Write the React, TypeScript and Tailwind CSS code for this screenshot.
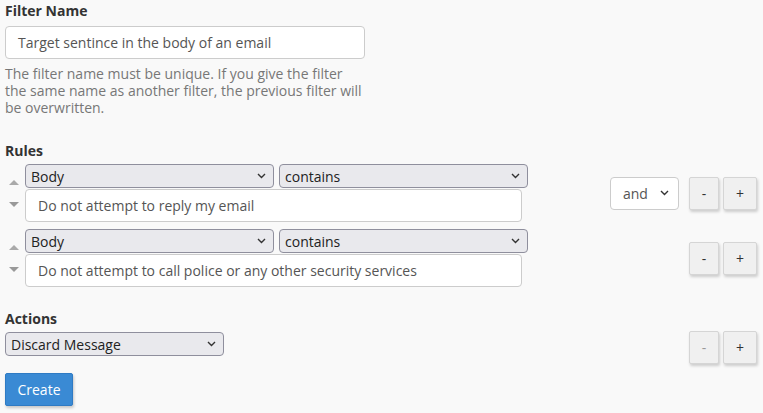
import React from "react";

const Chevron = () => (
  <svg width="9" height="6" viewBox="0 0 9 6" className="shrink-0">
    <path d="M1 1 L4.5 4.5 L8 1" fill="none" stroke="#333" strokeWidth="1.4" />
  </svg>
);

const FakeSelect = ({ label, className }: { label: string; className: string }) => (
  <div
    className={`flex items-center justify-between h-[24px] rounded-[4px] border border-[#8f8f9d] bg-[#e9e9ed] pl-[5px] pr-[7px] text-[14px] text-[#222] ${className}`}
  >
    <span>{label}</span>
    <Chevron />
  </div>
);

const TextBox = ({ value, className }: { value: string; className: string }) => (
  <div
    className={`flex shrink-0 items-center h-[33px] rounded-[4px] border border-[#cccccc] bg-white pl-[12px] text-[14px] text-[#555] ${className}`}
  >
    {value}
  </div>
);

const Btn = ({ label, w, disabled }: { label: string; w: string; disabled?: boolean }) => (
  <div
    className={`flex items-center justify-center h-[33px] ${w} rounded-[2px] border border-[#d5d5d5] bg-[#f0f0f0] shadow-[1px_2px_3px_rgba(0,0,0,0.18)] text-[14px] ${
      disabled ? "text-[#999]" : "text-[#333]"
    }`}
  >
    {label}
  </div>
);

const Arrows = () => (
  <div className="flex w-[20px] flex-col items-center justify-center gap-[17px] pr-[2px]">
    <svg width="10" height="5" viewBox="0 0 10 5">
      <path d="M0 5 L5 0 L10 5 Z" fill="#aaaaaa" />
    </svg>
    <svg width="10" height="5" viewBox="0 0 10 5">
      <path d="M0 0 L5 5 L10 0 Z" fill="#999999" />
    </svg>
  </div>
);

const RuleRow = ({ text, showAnd }: { text: string; showAnd?: boolean }) => (
  <div className="flex items-center">
    <div className="flex">
      <Arrows />
      <div className="flex w-[503px] flex-col gap-[1px]">
        <div className="flex gap-[5px]">
          <FakeSelect label="Body" className="w-[249px]" />
          <FakeSelect label="contains" className="w-[249px]" />
        </div>
        <TextBox value={text} className="w-[497px]" />
      </div>
    </div>
    <div className="ml-[82px] w-[69px]">
      {showAnd && (
        <div className="flex h-[33px] items-center justify-between rounded-[4px] border border-[#cccccc] bg-white pl-[12px] pr-[9px] text-[14px] text-[#555]">
          <span>and</span>
          <Chevron />
        </div>
      )}
    </div>
    <div className="ml-[10px] flex gap-[4px]">
      <Btn label="-" w="w-[30px]" />
      <Btn label="+" w="w-[34px]" />
    </div>
  </div>
);

export default function App() {
  return (
    <div
      className="min-h-[413px] w-[763px] bg-[#f9f9f9] pl-[5px] pt-[1px]"
      style={{ fontFamily: '"Open Sans", "Noto Sans", sans-serif' }}
    >
      <div className="text-[14px] font-bold leading-[20px] text-[#333]">Filter Name</div>
      <TextBox value="Target sentince in the body of an email" className="mt-[5px] w-[360px]" />
      <p className="mt-[6px] w-[362px] text-[14px] leading-[17px] text-[#777]">
        The filter name must be unique. If you give the filter the same name as another filter, the previous filter will be overwritten.
      </p>

      <div className="mt-[25px] text-[14px] font-bold leading-[20px] text-[#333]">Rules</div>
      <div className="mt-[3px] flex flex-col gap-[7px]">
        <RuleRow text="Do not attempt to reply my email" showAnd />
        <RuleRow text="Do not attempt to call police or any other security services" />
      </div>

      <div className="mt-[22px] text-[14px] font-bold leading-[20px] text-[#333]">Actions</div>
      <div className="mt-[2px] flex items-start">
        <FakeSelect label="Discard Message" className="mt-[1px] w-[219px]" />
        <div className="ml-[465px] flex gap-[4px]">
          <Btn label="-" w="w-[30px]" disabled />
          <Btn label="+" w="w-[34px]" />
        </div>
      </div>

      <div className="mt-[9px] flex h-[33px] w-[68px] items-center justify-center rounded-[2px] border border-[#2f7bc4] bg-[#3a8ad4] text-[14px] text-white shadow-[1px_2px_3px_rgba(0,0,0,0.2)]">
        Create
      </div>
    </div>
  );
}
